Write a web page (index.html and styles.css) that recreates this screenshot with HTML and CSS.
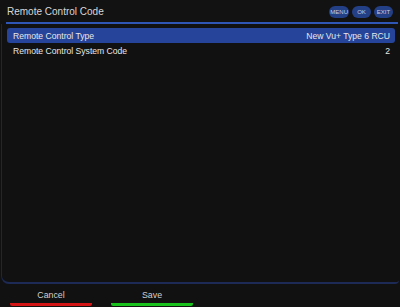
FILE: index.html
```html
<!DOCTYPE html>
<html lang="en">
<head>
    <meta charset="UTF-8">
    <link rel="stylesheet" href="styles.css">
    <title>Remote Control Code</title>
</head>
<body>
    <div class="screen">
        <div class="header">
            <div class="title">Remote Control Code</div>
            <div class="keys">
                <span class="key">MENU</span>
                <span class="key">OK</span>
                <span class="key">EXIT</span>
            </div>
        </div>
        <div class="rule"></div>

        <div class="panel">
            <div class="row selected">
                <span>Remote Control Type</span>
                <span>New Vu+ Type 6 RCU</span>
            </div>
            <div class="row">
                <span>Remote Control System Code</span>
                <span>2</span>
            </div>
        </div>

        <div class="footer">
            <div class="action red">Cancel</div>
            <div class="action green">Save</div>
        </div>
    </div>
</body>
</html>
```

FILE: styles.css
```css
body{
    margin: 0;
    padding: 0;
    background: #111111;
    font-family: "Liberation Sans", Arial, sans-serif;
    color: #e6e6e6;
}
.screen{
    width: 400px;
    height: 307px;
    display: flex;
    flex-direction: column;
    overflow: hidden;
}
.header{
    height: 21px;
    display: flex;
    align-items: center;
    justify-content: space-between;
    padding: 0 7px 0 7px;
    background: #121212;
}
.title{
    font-size: 10px;
    color: #d8d8d8;
    margin-top: 2px;
}
.keys{
    display: flex;
    gap: 3px;
    margin-top: 3px;
}
.key{
    height: 12px;
    min-width: 19px;
    padding: 0 1px;
    border-radius: 6px;
    background: #233f85;
    color: #c8cde0;
    font-size: 6px;
    display: flex;
    align-items: center;
    justify-content: center;
    box-sizing: border-box;
}
.rule{
    height: 2px;
    margin: 1px 2px 0 6px;
    background: #2f55b5;
}
.panel{
    flex: 1;
    border-left: 1px solid #1a2548;
    border-bottom: 2px solid #1d2a55;
    border-radius: 0 0 4px 8px;
    margin: 0 1px 0 1px;
    padding: 4px 4px 0 5px;
    background: #111111;
}
.row{
    height: 15px;
    display: flex;
    align-items: center;
    justify-content: space-between;
    padding: 0 5px 0 6px;
    font-size: 8.6px;
    color: #e8e8e8;
}
.row.selected{
    background: #25449a;
    border-radius: 3px;
}
.footer{
    height: 22px;
    display: flex;
    align-items: flex-end;
    padding: 0 0 1px 10px;
    gap: 19px;
}
.action{
    width: 82px;
    text-align: center;
    font-size: 8.8px;
    color: #d0d0d0;
    padding-bottom: 2px;
    border-bottom: 3px solid;
    border-radius: 0 0 2px 2px;
    line-height: 12px;
}
.action.red{
    border-color: #d41515;
}
.action.green{
    border-color: #19c21c;
}
```
